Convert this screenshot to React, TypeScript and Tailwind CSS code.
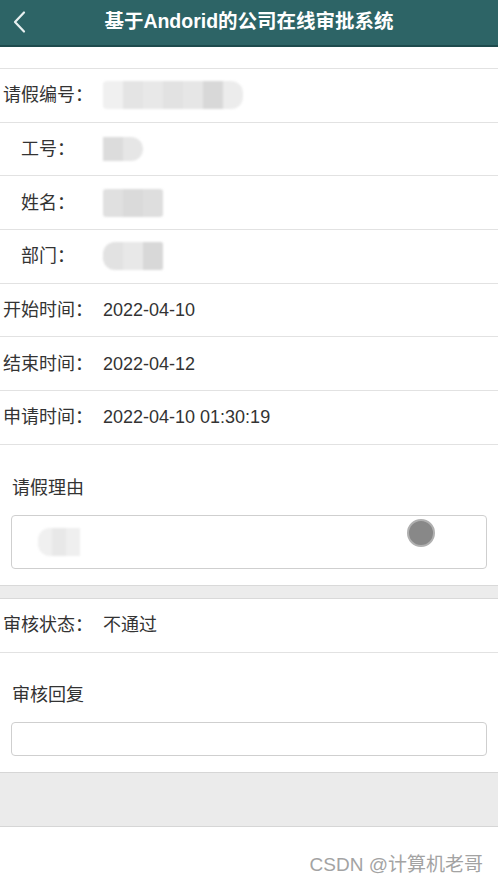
import React from "react";

const font = { fontFamily: '"Liberation Sans", "Noto Sans CJK SC", sans-serif' };

function Blur({ w, h, cells, rounded = "rounded-[10px]" }: { w: number; h: number; cells: string[]; rounded?: string }) {
  return (
    <div className={`flex overflow-hidden blur-[1px] ${rounded}`} style={{ width: w, height: h }}>
      {cells.map((c, i) => (
        <div key={i} className="flex-1 h-full" style={{ background: c }} />
      ))}
    </div>
  );
}

function Row({ label, children }: { label: string; children: React.ReactNode }) {
  return (
    <div className="flex items-center h-[53.7px] border-b border-[#e2e2e2]">
      <div className="w-[96px] text-center text-[18px] text-[#333] leading-none">{label}</div>
      <div className="ml-[7px] flex items-center text-[18px] text-[#333] leading-none">{children}</div>
    </div>
  );
}

export default function App() {
  return (
    <div className="w-[498px] h-[887px] bg-white overflow-hidden" style={font}>
      <div className="relative h-[47px] bg-[#2d6466] border-b-2 border-[#1e4b4d] flex items-center justify-center">
        <svg className="absolute left-[11px] top-[9px]" width="18" height="26" viewBox="0 0 18 26">
          <path d="M13 3.5 L4 13 L13 22.5" fill="none" stroke="#e8f0f0" strokeWidth="2.2" strokeLinecap="round" strokeLinejoin="round" />
        </svg>
        <div className="text-white font-bold text-[19.5px] leading-none -mt-[2px]">基于Andorid的公司在线审批系统</div>
      </div>
      <div className="h-[21px]" />
      <div className="border-t border-[#e2e2e2]">
        <Row label="请假编号：">
          <Blur w={140} h={28} cells={["#f0f0f0", "#e4e4e4", "#e8e8e8", "#e2e2e2", "#e6e6e6", "#d8d8d8", "#ececec"]} rounded="rounded-r-[12px] rounded-l-[4px]" />
        </Row>
        <Row label="工号：">
          <Blur w={40} h={24} cells={["#dcdcdc", "#e6e6e6"]} rounded="rounded-r-[12px]" />
        </Row>
        <Row label="姓名：">
          <Blur w={60} h={28} cells={["#e0e0e0", "#dadada", "#dedede"]} rounded="rounded-[3px]" />
        </Row>
        <Row label="部门：">
          <Blur w={60} h={28} cells={["#e2e2e2", "#e8e8e8", "#d8d8d8"]} rounded="rounded-l-[12px] rounded-r-[2px]" />
        </Row>
        <Row label="开始时间：">2022-04-10</Row>
        <Row label="结束时间：">2022-04-12</Row>
        <Row label="申请时间：">2022-04-10 01:30:19</Row>
      </div>
      <div className="pt-[34px] px-[11px] pb-[16px]">
        <div className="pl-[1px] text-[18px] text-[#333] leading-none">请假理由</div>
        <div className="relative mt-[18px] h-[54px] border border-[#cfcfcf] rounded-[4px] flex items-center pl-[26px]">
          <Blur w={42} h={28} cells={["#f0f0f0", "#e8e8e8", "#efefef"]} rounded="rounded-l-[12px]" />
          <div className="absolute left-[395px] top-[3px] w-[28px] h-[28px] rounded-full bg-[#888] border-2 border-[#b0b0b0]" />
        </div>
      </div>
      <div className="h-[14px] bg-[#ececec] border-t border-b border-[#d9d9d9]" />
      <div className="flex items-center h-[54px] border-b border-[#e2e2e2]">
        <div className="w-[96px] text-center text-[18px] text-[#333] leading-none">审核状态：</div>
        <div className="ml-[7px] text-[18px] text-[#333] leading-none">不通过</div>
      </div>
      <div className="pt-[33px] px-[11px] pb-[16px]">
        <div className="pl-[1px] text-[18px] text-[#333] leading-none">审核回复</div>
        <div className="mt-[18px] h-[34px] border border-[#cfcfcf] rounded-[4px]" />
      </div>
      <div className="h-[55px] bg-[#ebebeb] border-t border-b border-[#d6d6d6]" />
      <div className="flex justify-end pr-[15px] pt-[28px]">
        <div className="text-[19px] text-[#a3a3a3] leading-none">CSDN @计算机老哥</div>
      </div>
    </div>
  );
}
